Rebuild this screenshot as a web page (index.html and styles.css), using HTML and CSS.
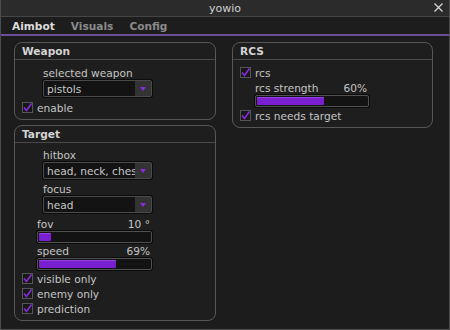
FILE: index.html
```html
<html>
    <head>
        <link rel="stylesheet" href="styles.css">
    </head>
    <body>
        <div class="window">
            <div class="titlebar">
                <span class="title">yowio</span>
                <svg class="close" width="9" height="9" viewBox="0 0 9 9">
                    <path d="M0.5 0.5 L8.5 8.5 M8.5 0.5 L0.5 8.5" stroke="#d8d8d8" stroke-width="1.2"/>
                </svg>
            </div>
            <div class="tabs">
                <span class="tab active">Aimbot</span>
                <span class="tab">Visuals</span>
                <span class="tab">Config</span>
            </div>
            <div class="content">
                <div class="column left">
                    <div class="group weapon">
                        <div class="groupHeader">Weapon</div>
                        <div class="groupBody">
                            <div class="label indent">selected weapon</div>
                            <div class="select indent"><span class="value">pistols</span><span class="arrow"><i></i></span></div>
                            <div class="check"><span class="box"><svg width="11" height="11" viewBox="0 0 11 11"><path d="M2 5.5 L4.5 8.5 L9.5 1.5" fill="none" stroke="#8a2be2" stroke-width="1.6"/></svg></span>enable</div>
                        </div>
                    </div>
                    <div class="group target">
                        <div class="groupHeader">Target</div>
                        <div class="groupBody">
                            <div class="label indent">hitbox</div>
                            <div class="select indent"><span class="value">head, neck, chest</span><span class="arrow"><i></i></span></div>
                            <div class="label indent gapTop">focus</div>
                            <div class="select indent"><span class="value">head</span><span class="arrow"><i></i></span></div>
                            <div class="sliderLabel half fovGap"><span>fov</span><span>10 °</span></div>
                            <div class="slider half"><div class="fill" style="width: 12px"></div></div>
                            <div class="sliderLabel half speedGap"><span>speed</span><span>69%</span></div>
                            <div class="slider half"><div class="fill" style="width: 77px"></div></div>
                            <div class="checks">
                                <div class="check"><span class="box"><svg width="11" height="11" viewBox="0 0 11 11"><path d="M2 5.5 L4.5 8.5 L9.5 1.5" fill="none" stroke="#8a2be2" stroke-width="1.6"/></svg></span>visible only</div>
                                <div class="check"><span class="box"><svg width="11" height="11" viewBox="0 0 11 11"><path d="M2 5.5 L4.5 8.5 L9.5 1.5" fill="none" stroke="#8a2be2" stroke-width="1.6"/></svg></span>enemy only</div>
                                <div class="check"><span class="box"><svg width="11" height="11" viewBox="0 0 11 11"><path d="M2 5.5 L4.5 8.5 L9.5 1.5" fill="none" stroke="#8a2be2" stroke-width="1.6"/></svg></span>prediction</div>
                            </div>
                        </div>
                    </div>
                </div>
                <div class="column right">
                    <div class="group rcs">
                        <div class="groupHeader">RCS</div>
                        <div class="groupBody">
                            <div class="check"><span class="box"><svg width="11" height="11" viewBox="0 0 11 11"><path d="M2 5.5 L4.5 8.5 L9.5 1.5" fill="none" stroke="#8a2be2" stroke-width="1.6"/></svg></span>rcs</div>
                            <div class="sliderLabel inner"><span>rcs strength</span><span>60%</span></div>
                            <div class="slider inner"><div class="fill" style="width: 67px"></div></div>
                            <div class="check"><span class="box"><svg width="11" height="11" viewBox="0 0 11 11"><path d="M2 5.5 L4.5 8.5 L9.5 1.5" fill="none" stroke="#8a2be2" stroke-width="1.6"/></svg></span>rcs needs target</div>
                        </div>
                    </div>
                </div>
            </div>
        </div>
    </body>
</html>
```

FILE: styles.css
```css
body{
    margin: 0;
    background: #1c1c1c;
    font-family: "DejaVu Sans", Verdana, sans-serif;
    font-size: 10.6px;
    color: #c4c4c4;
}
.window{
    width: 450px;
    height: 330px;
    box-sizing: border-box;
    border: 1px solid #4c4c4c;
    border-top: none;
    background: #1c1c1c;
    display: flex;
    flex-direction: column;
}
.titlebar{
    height: 16px;
    background: #2b2b2b;
    border-bottom: 1px solid #454545;
    display: flex;
    align-items: center;
    justify-content: center;
    position: relative;
}
.title{
    font-size: 11px;
    color: #cfcfcf;
}
.close{
    position: absolute;
    right: 6px;
    top: 3px;
}
.tabs{
    height: 17px;
    display: flex;
    align-items: center;
    padding-left: 11px;
    gap: 16px;
    border-bottom: 2px solid #6a4e98;
    background: #1d1d1d;
}
.tab{
    font-weight: bold;
    color: #8a8a8a;
}
.tab.active{
    color: #dcdcdc;
}
.content{
    display: flex;
    padding: 6px 0 0 13px;
    gap: 16px;
}
.column{
    display: flex;
    flex-direction: column;
    gap: 5px;
}
.column.left{
    width: 202px;
}
.column.right{
    width: 201px;
}
.group{
    border: 1px solid #575757;
    border-radius: 8px;
    background: #1e1e1e;
}
.groupHeader{
    height: 16px;
    line-height: 16px;
    padding-left: 7px;
    font-weight: bold;
    color: #d4d4d4;
    border-bottom: 1px solid #4a4a4a;
}
.groupBody{
    display: flex;
    flex-direction: column;
    padding: 6px 0 4px 7px;
}
.target .groupBody,
.rcs .groupBody{
    padding-top: 5px;
}
.label{
    height: 14px;
    line-height: 14px;
}
.indent{
    margin-left: 21px;
}
.gapTop{
    margin-top: 3px;
}
.fovGap{
    margin-top: 4px;
}
.speedGap{
    margin-top: 1px;
}
.select{
    width: 109px;
    height: 17px;
    box-sizing: border-box;
    border: 1px solid #4a4a4a;
    border-radius: 2px;
    background: #131313;
    display: flex;
    align-items: center;
    box-shadow: 0 0 0 1px #0c0c0c;
}
.select .value{
    flex: 1;
    padding-left: 3px;
    white-space: nowrap;
    overflow: hidden;
    color: #c8c8c8;
}
.select .arrow{
    width: 16px;
    height: 15px;
    background: #333333;
    display: flex;
    align-items: center;
    justify-content: center;
}
.select .arrow i{
    width: 0;
    height: 0;
    border-left: 3px solid transparent;
    border-right: 3px solid transparent;
    border-top: 4px solid #8a2be2;
}
.check{
    height: 15px;
    display: flex;
    align-items: center;
    gap: 4px;
    margin-top: 3px;
}
.checks{
    margin-top: 1px;
}
.checks .check{
    margin-top: 0;
}
.box{
    width: 11px;
    height: 11px;
    box-sizing: border-box;
    border: 1px solid #555555;
    background: #181818;
    display: flex;
    align-items: center;
    justify-content: center;
}
.box svg{
    flex: none;
}
.sliderLabel{
    height: 14px;
    line-height: 14px;
    display: flex;
    justify-content: space-between;
    padding-right: 2px;
    box-sizing: border-box;
}
.half{
    margin-left: 15px;
    width: 115px;
}
.inner{
    margin-left: 15px;
    width: 114px;
}
.rcs .groupBody .check:first-child{
    margin-top: 0;
}
.rcs .sliderLabel{
    margin-top: 1px;
}
.rcs .slider + .check{
    margin-top: 1px;
}
.slider{
    height: 12px;
    box-sizing: border-box;
    border: 1px solid #505050;
    border-radius: 2px;
    background: #131313;
    padding: 1px;
    box-shadow: 0 0 0 1px #0c0c0c;
}
.slider .fill{
    height: 8px;
    background: #7a1fd0;
    border-radius: 1px;
    box-shadow: inset 0 1px 0 #9340e4;
}
```
